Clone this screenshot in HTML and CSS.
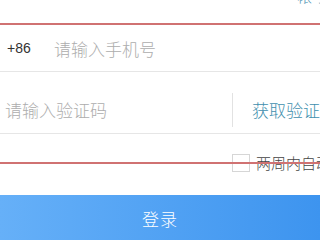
FILE: index.html
```html
<!DOCTYPE html>
<html lang="zh">
<head>
<meta charset="utf-8">
<link rel="stylesheet" href="styles.css">
</head>
<body>
<div class="page">
  <div class="top"><span class="account">帐号</span></div>
  <div class="row row-phone">
    <span class="code">+86</span>
    <span class="ph phone-ph">请输入手机号</span>
  </div>
  <div class="row row-sms">
    <span class="ph">请输入验证码</span>
    <span class="divider"></span>
    <span class="get">获取验证码</span>
  </div>
  <div class="remember">
    <span class="box"></span>
    <span class="rem-text">两周内自动登录</span>
  </div>
  <div class="btn">登录</div>
  <div class="mark mark-top"></div>
  <div class="mark mark-bottom"></div>
</div>
</body>
</html>
```
FILE: styles.css
```css
html, body {
  margin: 0;
  padding: 0;
  background: #ffffff;
}
.page {
  position: relative;
  width: 320px;
  height: 240px;
  overflow: hidden;
  font-family: "Noto Sans CJK SC", "Noto Sans", sans-serif;
  font-weight: 300;
}
.top {
  height: 25px;
  display: flex;
  justify-content: flex-end;
}
.account {
  margin-top: -12px;
  margin-right: -7px;
  font-size: 15px;
  line-height: 15px;
  color: #4a8fb0;
  flex: none;
}
.row {
  display: flex;
  align-items: center;
  border-bottom: 1px solid #e6e6e6;
  box-sizing: border-box;
}
.row-phone {
  height: 47px;
}
.code {
  margin-left: 7px;
  width: 47px;
  flex: none;
  font-family: "Liberation Sans", sans-serif;
  font-size: 14px;
  color: #333333;
}
.ph {
  font-size: 17px;
  color: #adadad;
  white-space: nowrap;
}
.row-sms {
  margin-top: 14px;
  height: 48px;
  padding-left: 5px;
}
.row-sms .ph {
  width: 227px;
  flex: none;
}
.divider {
  width: 1px;
  height: 34px;
  background: #e2e2e2;
  flex: none;
}
.get {
  margin-left: 19px;
  font-size: 17px;
  color: #3f8fae;
  white-space: nowrap;
  flex: none;
}
.remember {
  display: flex;
  align-items: center;
  padding-left: 232px;
  margin-top: 20px;
  height: 17px;
}
.box {
  width: 16px;
  height: 16px;
  border: 1px solid #d6d6d6;
  flex: none;
}
.rem-text {
  margin-left: 6px;
  font-size: 15px;
  color: #444444;
  white-space: nowrap;
  flex: none;
}
.btn {
  margin-top: 24px;
  height: 50px;
  background: linear-gradient(to right, #66b0f8, #3d94ef);
  color: #ffffff;
  font-size: 17px;
  text-align: center;
  line-height: 48px;
  letter-spacing: 1px;
}
.mark {
  position: absolute;
  left: 0;
  right: 0;
  height: 2px;
  background: #d07272;
}
.mark-top {
  top: 23px;
}
.mark-bottom {
  top: 162px;
}
```
